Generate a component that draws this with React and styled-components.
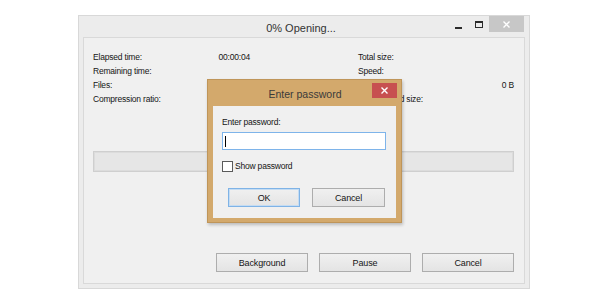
import React from "react";
import styled, { createGlobalStyle } from "styled-components";

const Global = createGlobalStyle`
  html, body { margin: 0; padding: 0; background: #ffffff; }
  body { font-family: "Liberation Sans", Arial, sans-serif; color: #151515; }
`;

const Page = styled.div`
  position: relative;
  width: 608px;
  height: 300px;
  box-sizing: border-box;
  padding: 15px 0 0 78px;
`;

const Window = styled.div`
  width: 452px;
  height: 274px;
  box-sizing: border-box;
  border: 1px solid #d8d8d8;
  background: #ececec;
  display: flex;
  flex-direction: column;
  padding: 0 4px 4px 4px;
`;

const TitleBar = styled.div`
  height: 21px;
  display: grid;
  grid-template-columns: 1fr;
  margin: 0 1px 0 -5px;
`;

const TitleText = styled.div`
  grid-area: 1 / 1;
  justify-self: center;
  align-self: start;
  padding-top: 5px;
  font-size: 11px;
  line-height: 14px;
  color: #333;
`;

const Controls = styled.div`
  grid-area: 1 / 1;
  justify-self: end;
  align-self: start;
  display: flex;
  align-items: flex-start;
`;

const MinGlyph = styled.div`
  width: 7px;
  height: 2px;
  background: #2b2b2b;
  margin-top: 11px;
  margin-right: 13px;
`;

const MaxGlyph = styled.div`
  width: 8px;
  height: 7px;
  box-sizing: border-box;
  border: 1px solid #2b2b2b;
  border-top-width: 2px;
  margin-top: 5px;
  margin-right: 6px;
`;

const CloseBtn = styled.div`
  width: ${(p) => p.$w}px;
  height: ${(p) => p.$h}px;
  background: ${(p) => p.$bg};
  display: flex;
  align-items: center;
  justify-content: center;
  margin-top: ${(p) => p.$top}px;
`;

const Panel = styled.div`
  flex: 1;
  border: 1px solid #d9d9d9;
  background: #f0f0f0;
  padding: 12px 10px 11px 9px;
  display: flex;
  flex-direction: column;
`;

const Stats = styled.div`
  display: flex;
  gap: 108px;
`;

const StatGroup = styled.div`
  width: ${(p) => p.$w}px;
  display: grid;
  grid-template-columns: 1fr auto;
  font-size: 8.5px;
  letter-spacing: -0.2px;
  line-height: 14px;
  color: #151515;
  white-space: nowrap;
`;

const Value = styled.span`
  text-align: right;
`;

const Progress = styled.div`
  margin-top: 45px;
  height: 21px;
  box-sizing: border-box;
  border: 1px solid #cfcfcf;
  box-shadow: inset 0 0 0 1px #dcdcdc;
  background: #e6e6e6;
`;

const ButtonRow = styled.div`
  margin-top: auto;
  display: flex;
  justify-content: ${(p) => p.$justify || "flex-end"};
  gap: ${(p) => p.$gap}px;
  padding-left: ${(p) => p.$pl || 0}px;
`;

const Button = styled.div`
  width: ${(p) => p.$w}px;
  height: 19px;
  box-sizing: border-box;
  border: 1px solid ${(p) => (p.$primary ? "#7fb3e6" : "#adadad")};
  box-shadow: ${(p) => (p.$primary ? "inset 0 0 0 1px #c4dcf3" : "none")};
  background: linear-gradient(#f0f0f0, #e4e4e4);
  font-size: 9px;
  letter-spacing: -0.15px;
  color: #151515;
  display: flex;
  align-items: center;
  justify-content: center;
`;

const Dialog = styled.div`
  position: absolute;
  left: 207px;
  top: 79px;
  width: 195px;
  height: 144px;
  box-sizing: border-box;
  background: #d3a96c;
  border: 1px solid #bf9559;
  box-shadow: 1px 2px 3px rgba(0, 0, 0, 0.22);
  display: flex;
  flex-direction: column;
  padding: 0 5px 4px 5px;
`;

const DialogTitleBar = styled.div`
  height: 26px;
  display: grid;
  grid-template-columns: 1fr;
  margin-right: -1px;
`;

const DialogTitle = styled.div`
  grid-area: 1 / 1;
  justify-self: center;
  align-self: center;
  font-size: 10.5px;
  line-height: 14px;
  color: #3a3a3a;
  padding-top: 1px;
`;

const DialogClose = styled(CloseBtn)`
  grid-area: 1 / 1;
  justify-self: end;
  align-self: start;
`;

const DialogBody = styled.div`
  flex: 1;
  background: #f0f0f0;
  padding: 9px 9px 11px 9px;
  display: flex;
  flex-direction: column;
`;

const FieldLabel = styled.div`
  font-size: 8.5px;
  letter-spacing: -0.2px;
  line-height: 14px;
  color: #151515;
`;

const Field = styled.div`
  margin-top: 3px;
  width: 164px;
  height: 18px;
  box-sizing: border-box;
  border: 1px solid #7eb4ea;
  background: #ffffff;
  display: flex;
  align-items: center;
  padding-left: 2px;
`;

const Caret = styled.div`
  width: 1px;
  height: 11px;
  background: #000;
`;

const CheckRow = styled.div`
  margin-top: 11px;
  display: flex;
  align-items: center;
  gap: 2px;
  font-size: 8.5px;
  letter-spacing: -0.2px;
  line-height: 11px;
  color: #151515;
`;

const CheckBox = styled.div`
  width: 11px;
  height: 11px;
  box-sizing: border-box;
  border: 1px solid #5a5a5a;
  background: #fff;
`;

const DialogButtons = styled(ButtonRow)`
  margin-top: 16px;
`;

const Cross = ({ size = 7, width = 1.4 }) => (
  <svg width={size} height={size} viewBox="0 0 7 7">
    <path d="M0.5 0.5 L6.5 6.5 M6.5 0.5 L0.5 6.5" stroke="#fff" strokeWidth={width} />
  </svg>
);

export default function App() {
  return (
    <Page>
      <Global />
      <Window>
        <TitleBar>
          <TitleText>0% Opening...</TitleText>
          <Controls>
            <MinGlyph />
            <MaxGlyph />
            <CloseBtn $w={35} $h={16} $bg="#c7c7c7" $top={0}>
              <Cross />
            </CloseBtn>
          </Controls>
        </TitleBar>
        <Panel>
          <Stats>
            <StatGroup $w={157}>
              <span>Elapsed time:</span>
              <Value>00:00:04</Value>
              <span>Remaining time:</span>
              <Value></Value>
              <span>Files:</span>
              <Value>0</Value>
              <span>Compression ratio:</span>
              <Value></Value>
            </StatGroup>
            <StatGroup $w={156}>
              <span>Total size:</span>
              <Value></Value>
              <span>Speed:</span>
              <Value></Value>
              <span>Processed:</span>
              <Value>0 B</Value>
              <span>Compressed size:</span>
              <Value></Value>
            </StatGroup>
          </Stats>
          <Progress />
          <ButtonRow $gap={11}>
            <Button $w={92}>Background</Button>
            <Button $w={92}>Pause</Button>
            <Button $w={92}>Cancel</Button>
          </ButtonRow>
        </Panel>
      </Window>
      <Dialog>
        <DialogTitleBar>
          <DialogTitle>Enter password</DialogTitle>
          <DialogClose $w={25} $h={15} $bg="#c75050" $top={3}>
            <Cross />
          </DialogClose>
        </DialogTitleBar>
        <DialogBody>
          <FieldLabel>Enter password:</FieldLabel>
          <Field>
            <Caret />
          </Field>
          <CheckRow>
            <CheckBox />
            <span>Show password</span>
          </CheckRow>
          <DialogButtons $gap={12} $pl={6} $justify="flex-start">
            <Button $w={72} $primary>OK</Button>
            <Button $w={73}>Cancel</Button>
          </DialogButtons>
        </DialogBody>
      </Dialog>
    </Page>
  );
}
